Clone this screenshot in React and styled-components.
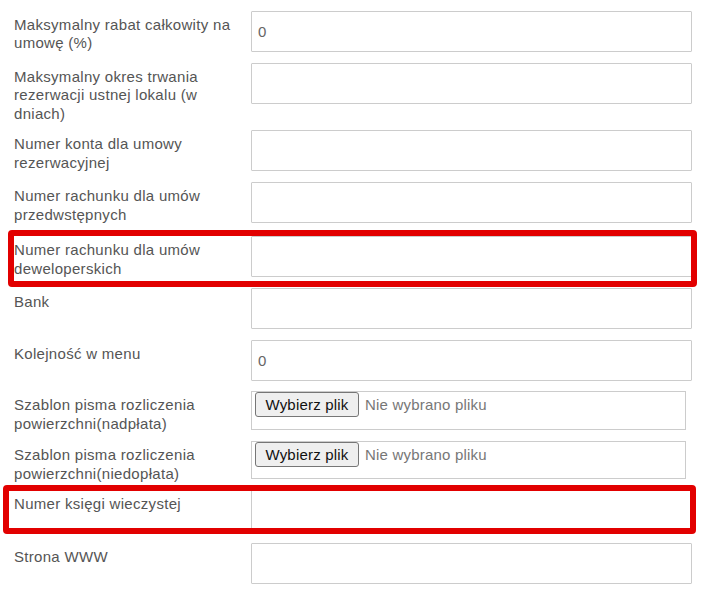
import React from "react";
import styled, { createGlobalStyle } from "styled-components";

const GlobalStyle = createGlobalStyle`
  body {
    margin: 0;
    background: #fff;
    font-family: "Liberation Sans", Arial, sans-serif;
  }
`;

// layout
const Form = styled.form`
  padding: 11px 0 0 14px;
  display: flex;
  flex-direction: column;
  align-items: flex-start;
`;

const Row = styled.div`
  position: relative;
  display: grid;
  width: 678px;
  grid-template-columns: 237px 441px;
  align-items: start;
  margin-bottom: ${(p) => p.$mb ?? 11}px;
`;

const Label = styled.label`
  padding-top: 5px;
  margin-bottom: -4px;
  font-size: 15px;
  line-height: 18.4px;
  letter-spacing: 0.3px;
  color: #555;
  padding-right: 6px;
`;

const TextInput = styled.input`
  box-sizing: border-box;
  width: 441px;
  height: 41px;
  margin: 0;
  padding: 0 6px;
  border: 1px solid #ccc;
  border-radius: 1px;
  font-family: "Liberation Sans", Arial, sans-serif;
  font-size: 15px;
  color: #666;
  outline: none;
`;

const FileBox = styled.div`
  box-sizing: border-box;
  width: 435px;
  height: ${(p) => p.$h || 39}px;
  border: 1px solid #ccc;
  padding: 0 3px;
  display: flex;
  align-items: flex-start;
  gap: 6px;
`;

const FileButton = styled.button`
  box-sizing: border-box;
  width: 104px;
  height: 25px;
  margin: 0;
  padding: 0;
  border: 1px solid #767676;
  border-radius: 3px;
  background: #efefef;
  font-family: "Liberation Sans", Arial, sans-serif;
  font-size: 15px;
  letter-spacing: 0.2px;
  color: #111;
`;

const FileName = styled.span`
  font-size: 15px;
  line-height: 25px;
  letter-spacing: 0.2px;
  color: #777;
`;

// red annotation frame drawn over a row
const Highlight = styled.div`
  position: absolute;
  top: ${(p) => p.$t}px;
  left: ${(p) => p.$l}px;
  right: ${(p) => p.$r}px;
  bottom: ${(p) => p.$b}px;
  border: 6px solid #e20000;
  border-radius: 4px;
  pointer-events: none;
`;

const fields = [
  { label: "Maksymalny rabat całkowity na umowę (%)", value: "0" },
  { label: "Maksymalny okres trwania rezerwacji ustnej lokalu (w dniach)" },
  { label: "Numer konta dla umowy rezerwacyjnej" },
  { label: "Numer rachunku dla umów przedwstępnych", mb: 13 },
  { label: "Numer rachunku dla umów deweloperskich", hl: { t: -6, l: -6, r: -5, b: -10 } },
  { label: "Bank" },
  { label: "Kolejność w menu", value: "0", mb: 10 },
  { label: "Szablon pisma rozliczenia powierzchni(nadpłata)", file: true },
  { label: "Szablon pisma rozliczenia powierzchni(niedopłata)", file: true, h: 38 },
  { label: "Numer księgi wieczystej", mb: 12, hl: { t: -5, l: -11, r: -4, b: -3 } },
  { label: "Strona WWW" },
];

export default function App() {
  return (
    <>
      <GlobalStyle />
      <Form onSubmit={(e) => e.preventDefault()}>
        {fields.map((f, i) => (
          <Row key={i} $mb={f.mb}>
            <Label>{f.label}</Label>
            {f.file ? (
              <FileBox $h={f.h}>
                <FileButton type="button">Wybierz plik</FileButton>
                <FileName>Nie wybrano pliku</FileName>
              </FileBox>
            ) : (
              <TextInput type="text" defaultValue={f.value || ""} />
            )}
            {f.hl && <Highlight $t={f.hl.t} $l={f.hl.l} $r={f.hl.r} $b={f.hl.b} />}
          </Row>
        ))}
      </Form>
    </>
  );
}
